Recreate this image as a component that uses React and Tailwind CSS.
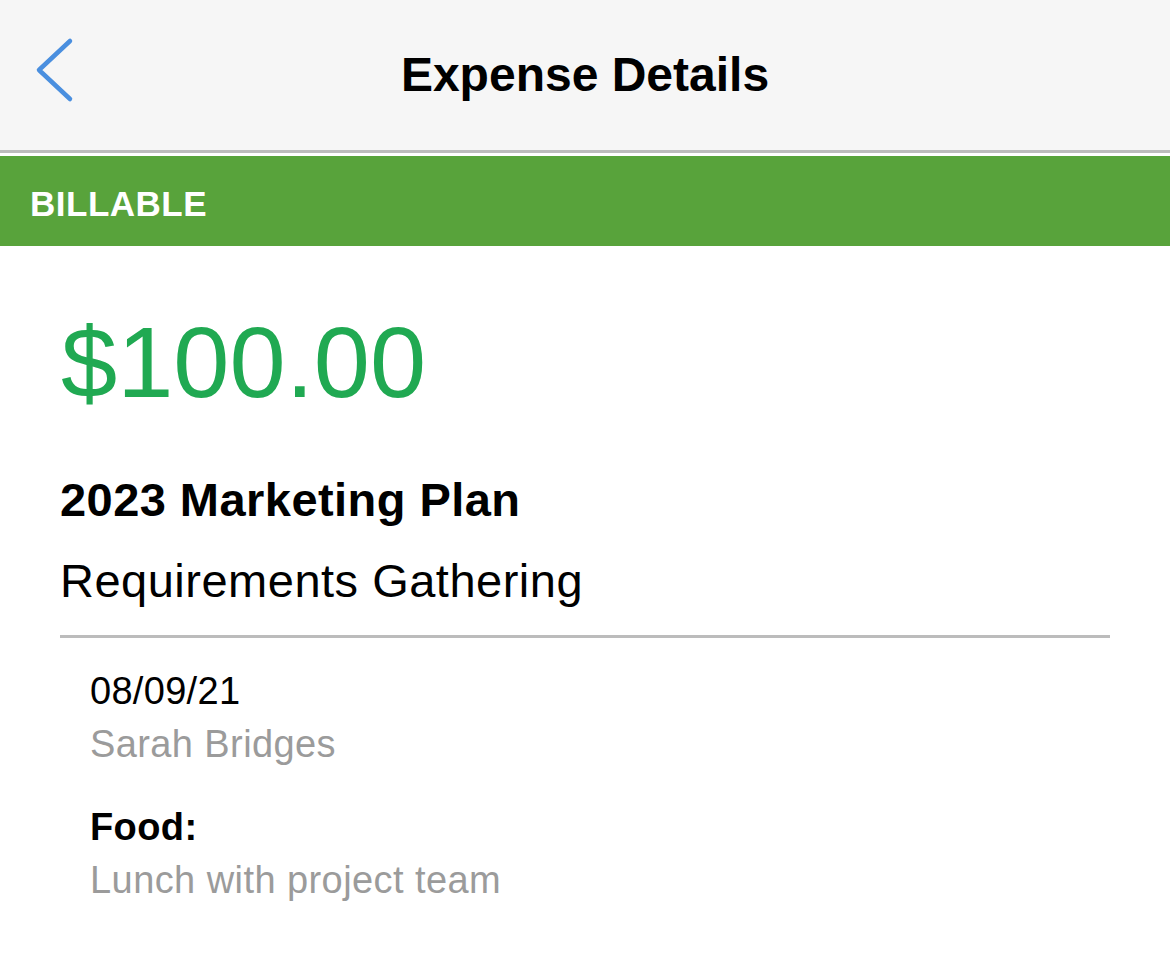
export default function App() {
  return (
    <div className="min-h-screen bg-white" style={{ fontFamily: '"Liberation Sans", Arial, sans-serif' }}>
      {/* Header */}
      <div className="relative h-[150px] bg-[#f6f6f6] flex items-center justify-center">
        <button className="absolute left-[30px] top-[34px] w-[50px] h-[72px]">
          <svg width="50" height="72" viewBox="30 34 50 72" fill="none">
            <path d="M70 41 L39 70 L70 99" stroke="#4a8fdf" strokeWidth="4.5" strokeLinecap="round" strokeLinejoin="round" />
          </svg>
        </button>
        <h1 className="text-[48px] leading-[150px] font-bold text-black">Expense Details</h1>
      </div>
      <div className="h-[3px] bg-[#bcbcbc]" />
      <div className="h-[3px] bg-white" />

      {/* Status bar */}
      <div className="h-[90px] bg-[#58a33b] flex items-center pl-[30px] pt-[4px]">
        <span className="text-[35px] font-bold text-white leading-none tracking-[0.5px]">BILLABLE</span>
      </div>

      {/* Body */}
      <div className="px-[60px]">
        <div className="mt-[66px] text-[101px] leading-[101px] text-[#20a952] ml-[1px]">$100.00</div>
        <div className="mt-[59px] text-[47px] leading-[56px] font-bold text-black tracking-[0.45px]">2023 Marketing Plan</div>
        <div className="mt-[25px] text-[47px] leading-[56px] text-black tracking-[0.5px]">Requirements Gathering</div>
        <div className="mt-[26px] h-[3px] bg-[#bcbcbc]" />

        <div className="pl-[30px]">
          <div className="mt-[27px] text-[38px] leading-[53px] text-black tracking-[0.3px]">08/09/21</div>
          <div className="text-[38px] leading-[53px] text-[#9b9b9b] tracking-[0.4px]">Sarah Bridges</div>
          <div className="mt-[30px] text-[38px] leading-[53px] font-bold text-black tracking-[0.4px]">Food:</div>
          <div className="text-[38px] leading-[53px] text-[#9b9b9b] tracking-[0.43px]">Lunch with project team</div>
        </div>
      </div>
    </div>
  );
}
